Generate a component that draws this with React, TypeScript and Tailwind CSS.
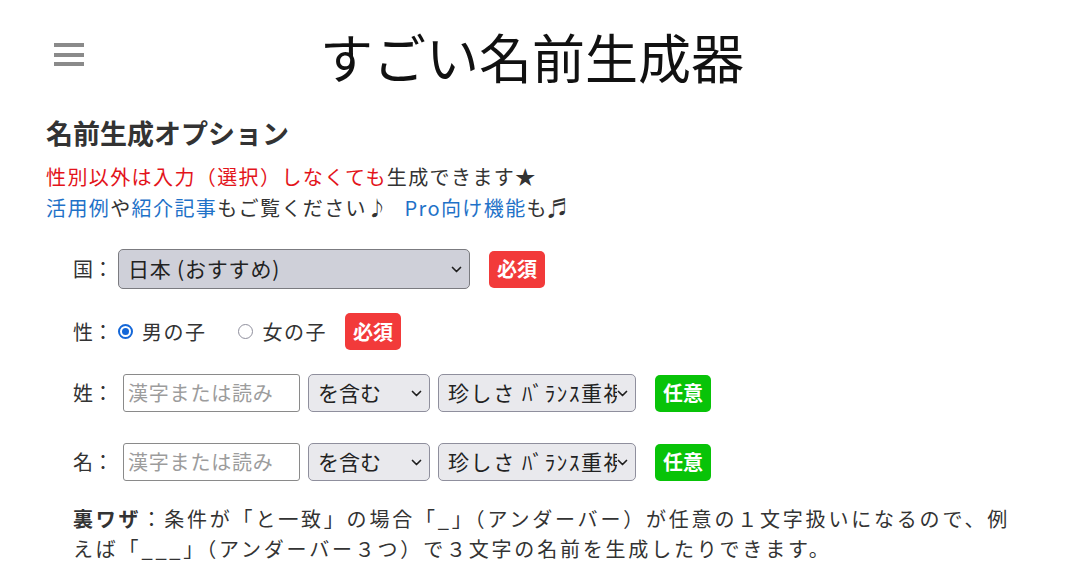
import React from "react";

function Chevron() {
  return (
    <svg width="11" height="7" viewBox="0 0 11 7" className="shrink-0">
      <path d="M1.5 1.5l4 4 4-4" fill="none" stroke="#1f1f1f" strokeWidth="1.7" strokeLinecap="round" strokeLinejoin="round" />
    </svg>
  );
}

function Badge({ text, color }: { text: string; color: "red" | "green" }) {
  return (
    <div
      className={
        "flex h-[37px] w-[56px] shrink-0 items-center justify-center rounded-[5px] text-[20px] font-bold leading-none text-white " +
        (color === "red" ? "bg-[#f23a3a]" : "bg-[#08c308]")
      }
    >
      {text}
    </div>
  );
}

function Label({ text }: { text: string }) {
  return <span className="w-[45px] shrink-0 text-[20px] leading-normal text-[#333]">{text}：</span>;
}

function FakeSelect({ text, w, dark, track }: { text: string; w: string; dark?: boolean; track?: string }) {
  return (
    <div
      className={
        "flex items-center justify-between overflow-hidden rounded-[5px] border pl-[9px] pr-[7px] " +
        w +
        (dark ? " h-[40px] border-[#7b7b80] bg-[#cfd0d9]" : " h-[38px] border-[#8f8f9d] bg-[#e9e9ed]")
      }
    >
      <span className={"min-w-0 overflow-hidden whitespace-nowrap text-[21px] leading-normal text-[#222] " + (track ?? "")}>{text}</span>
      <Chevron />
    </div>
  );
}

function TextInput() {
  return (
    <div className="flex h-[38px] w-[177px] shrink-0 items-center rounded-[3px] border border-[#8a8a8a] bg-white pl-[4px]">
      <span className="whitespace-nowrap text-[20px] leading-normal tracking-[0.8px] text-[#9c9c9c]">漢字または読み</span>
    </div>
  );
}

function Radio({ checked }: { checked?: boolean }) {
  return checked ? (
    <span className="flex h-[15px] w-[15px] shrink-0 items-center justify-center rounded-full border-2 border-[#1467d8] bg-white">
      <span className="block h-[7px] w-[7px] rounded-full bg-[#1467d8]" />
    </span>
  ) : (
    <span className="block h-[15px] w-[15px] shrink-0 rounded-full border-[1.5px] border-[#8f8f9d] bg-white" />
  );
}

export default function App() {
  return (
    <div className="min-h-[581px] w-full bg-white font-['Noto_Sans_CJK_JP','Noto_Sans',sans-serif] text-[#333]">
      <header className="relative flex h-[112px] items-center justify-center pr-[20px]">
        <button className="absolute left-[54px] top-[43px] flex w-[30px] flex-col gap-[5.5px]" aria-label="menu">
          <span className="h-[4px] w-full bg-[#8a8a8a]" />
          <span className="h-[4px] w-full bg-[#8a8a8a]" />
          <span className="h-[4px] w-full bg-[#8a8a8a]" />
        </button>
        <h1 className="text-[53px] font-normal leading-none text-[#111]">すごい名前生成器</h1>
      </header>

      <main className="pl-[46px]">
        <h2 className="mt-[3px] text-[27px] font-bold leading-[36px] text-[#333]">名前生成オプション</h2>
        <p className="mt-[10px] text-[20px] leading-[31px] tracking-[1.4px]">
          <span className="text-[#e3141b]">性別以外は入力（選択）しなくても</span>生成できます★
          <br />
          <a className="text-[#1f72c8]">活用例</a>や<a className="text-[#1f72c8]">紹介記事</a>もご覧ください♪
          <a className="ml-[16px] text-[#1f72c8]">Pro向け機能</a>も♬
        </p>

        <div className="pl-[27px]">
          <div className="mt-[26px] flex items-center">
            <Label text="国" />
            <FakeSelect text="日本 (おすすめ)" w="w-[352px]" dark track="tracking-[0.8px]" />
            <div className="ml-[19px]">
              <Badge text="必須" color="red" />
            </div>
          </div>

          <div className="mt-[24px] flex h-[37px] items-center">
            <Label text="性" />
            <Radio checked />
            <span className="ml-[9px] text-[20px] leading-normal tracking-[1.5px]">男の子</span>
            <div className="ml-[31px] flex items-center">
              <Radio />
            </div>
            <span className="ml-[10px] text-[20px] leading-normal tracking-[1.5px]">女の子</span>
            <div className="ml-[18px]">
              <Badge text="必須" color="red" />
            </div>
          </div>

          {["姓", "名"].map((k, i) => (
            <div key={k} className={"flex items-center " + (i === 0 ? "mt-[24px]" : "mt-[31px]")}>
              <Label text={k} />
              <div className="ml-[5px] flex items-center gap-[8px]">
                <TextInput />
                <FakeSelect text="を含む" w="w-[122px]" />
                <FakeSelect text="珍しさ ﾊﾞﾗﾝｽ重視" w="w-[198px]" track="tracking-[1.6px]" />
              </div>
              <div className="ml-[19px]">
                <Badge text="任意" color="green" />
              </div>
            </div>
          ))}

          <p className="mt-[23px] w-[950px] text-[20px] leading-[30px] tracking-[2.8px] text-[#333]">
            <b>裏ワザ</b>：条件が「と一致」の場合「_」（アンダーバー）が任意の１文字扱いになるので、例えば「___」（アンダーバー３つ）で３文字の名前を生成したりできます。
          </p>
        </div>
      </main>
    </div>
  );
}
